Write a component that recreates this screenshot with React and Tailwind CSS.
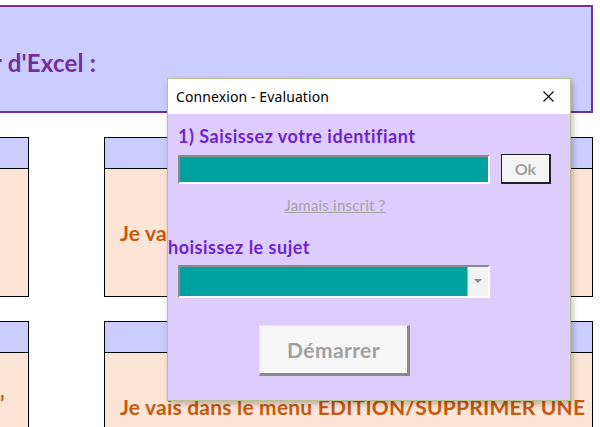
import React from "react";

const calibri = { fontFamily: "Lato, 'Open Sans', sans-serif" };
const segoe = { fontFamily: "'Noto Sans', 'Open Sans', sans-serif" };

function Card({ bodyH, children, className = "" }) {
  return (
    <div className={`border border-black bg-[#fce4d6] ${className}`}>
      <div className="h-[31px] bg-[#ccccff] border-b border-black" />
      <div className={bodyH}>{children}</div>
    </div>
  );
}

export default function App() {
  return (
    <div className="relative w-[600px] h-[427px] overflow-hidden bg-white" style={calibri}>
      {/* Banner */}
      <div className="mt-[5px] w-[593px] h-[108px] bg-[#ccccff] border-2 border-l-0 border-[#7030a0] flex items-center overflow-hidden">
        <span className="ml-[-7px] mt-[7px] text-[24px] font-bold text-[#7030a0] tracking-[0.2px] whitespace-nowrap">
          r d'Excel :
        </span>
      </div>

      {/* Cards grid */}
      <div className="mt-[24px] ml-[-2px] grid grid-cols-[31px_489px] gap-x-[75px] gap-y-[24px]">
        <Card bodyH="h-[127px]" />
        <Card bodyH="h-[127px] flex items-center pl-[15px] overflow-hidden">
          <span className="text-[21px] font-bold text-[#c55a11] tracking-[0.2px] whitespace-nowrap">
            Je vais dans le menu EDITION/AJOUTER
          </span>
        </Card>
        <Card bodyH="h-[120px] relative overflow-hidden">
          <span className="absolute left-[1px] top-[40px] text-[20px] leading-[20px] font-bold text-[#c55a11]">’</span>
        </Card>
        <Card bodyH="h-[120px] pt-[38px] pl-[15px] overflow-hidden">
          <span className="text-[21px] font-bold text-[#c55a11] whitespace-nowrap tracking-[0.2px]">
            Je vais dans le menu EDITION/SUPPRIMER UNE
          </span>
        </Card>
      </div>

      {/* Dialog */}
      <div className="absolute left-[167px] top-[78px] w-[404px] h-[323px] border border-[#b5c08a] bg-[#ddcdff] shadow-[2px_3px_6px_rgba(0,0,0,0.25)] flex flex-col">
        <div className="h-[35px] bg-white flex items-center justify-between pl-[8px] pr-[16px] shrink-0" style={segoe}>
          <span className="text-[14px] text-black tracking-[0.1px]">Connexion - Evaluation</span>
          <svg width="11" height="11" viewBox="0 0 11 11">
            <path d="M0.5 0.5 L10.5 10.5 M10.5 0.5 L0.5 10.5" stroke="#000" strokeWidth="1.1" />
          </svg>
        </div>
        <div className="flex-1 relative overflow-hidden">
          <div className="pl-[10px] pt-[11px] text-[18px] leading-[22px] font-bold text-[#6f22cf] tracking-[0.5px] whitespace-nowrap">
            1) Saisissez votre identifiant
          </div>
          <div className="mt-[7px] ml-[10px] flex items-center">
            <div className="w-[312px] h-[29px] bg-[#00a19e] border-2 border-t-[#8a8a8a] border-l-[#8a8a8a] border-b-white border-r-white" />
            <div className="ml-[11px] w-[50px] h-[30px] bg-[#f4f4f4] border border-[#202020] border-b-2 border-r-2 flex items-center justify-center text-[16px] font-bold text-[#a0a0a0]">
              Ok
            </div>
          </div>
          <div className="w-[334px] mt-[13px] flex justify-center">
            <span className="text-[15px] leading-[16px] text-[#a3a3a3] underline tracking-[0.2px]">Jamais inscrit ?</span>
          </div>
          <div className="mt-[23px] ml-0 text-[18px] leading-[22px] font-bold text-[#6f22cf] tracking-[0.5px] whitespace-nowrap">
            hoisissez le sujet
          </div>
          <div className="mt-[7px] ml-[10px] w-[312px] h-[33px] bg-[#00a19e] border-2 border-t-[#8a8a8a] border-l-[#8a8a8a] border-b-white border-r-white flex justify-end">
            <div className="w-[21px] h-full bg-[#f2f2f2] border-l border-[#b0b0b0] flex items-center justify-center">
              <svg width="8" height="5" viewBox="0 0 8 5">
                <path d="M0 0 L8 0 L4 4 Z" fill="#8a8a8a" />
              </svg>
            </div>
          </div>
          <div className="mt-[27px] ml-[91px] w-[151px] h-[51px] bg-[#f6f6f6] border border-t-[#e8e8e8] border-l-[#e8e8e8] border-b-[3px] border-r-[3px] border-b-[#8a8a8a] border-r-[#8a8a8a] flex items-center justify-center text-[21px] font-bold text-[#a0a0a0] tracking-[0.4px]">
            Démarrer
          </div>
        </div>
      </div>
    </div>
  );
}
